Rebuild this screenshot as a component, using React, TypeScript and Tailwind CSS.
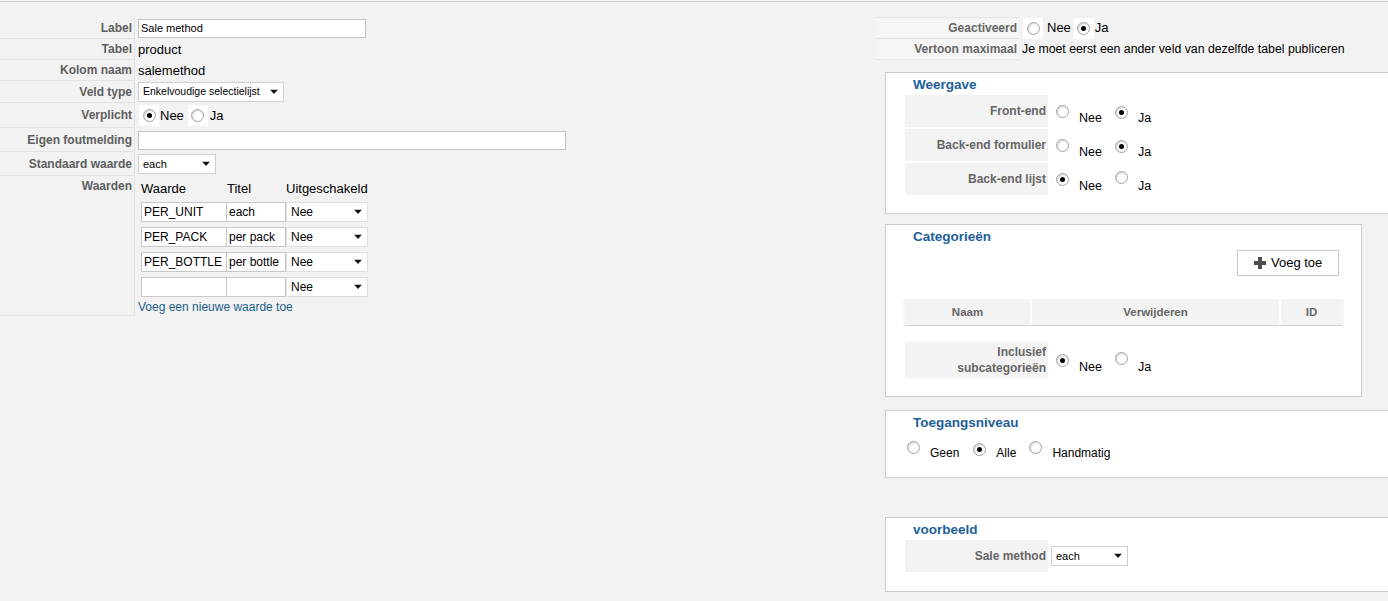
import React from "react";

function Radio({ checked = false }: { checked?: boolean }) {
  return (
    <span className="inline-flex h-[13px] w-[13px] shrink-0 items-center justify-center rounded-full border border-[#a3a3a3] bg-white shadow-[inset_1px_1px_2px_rgba(0,0,0,0.18)]">
      {checked && <span className="h-[5px] w-[5px] rounded-full bg-black" />}
    </span>
  );
}

function Arrow() {
  return (
    <svg width="8" height="5" viewBox="0 0 8 5" className="absolute right-[5px] top-1/2 -translate-y-1/2">
      <path d="M0 0h8L4 4.5z" fill="#111" />
    </svg>
  );
}

function Select({ value, w, text = "text-[11px]", border = "border-[#cfcfcf]" }: { value: string; w: string; text?: string; border?: string }) {
  return (
    <div className={`relative flex h-[20px] items-center border bg-white pl-[4px] ${border} ${w} ${text}`}>
      {value}
      <Arrow />
    </div>
  );
}

function LeftRow({ label, h, top = false, children }: { label: string; h: string; top?: boolean; children?: React.ReactNode }) {
  return (
    <div className="flex">
      <div
        className={`flex w-[135px] shrink-0 justify-end border-b border-r border-[#e2e2e2] pr-[2px] text-[12px] font-bold leading-[14px] text-[#5e5e5e] ${h} ${
          top ? "items-start pt-[3px]" : "items-center"
        }`}
      >
        {label}
      </div>
      <div className={`flex items-center pl-[3px] ${top ? "items-start" : ""}`}>{children}</div>
    </div>
  );
}

function PanelLabel({ children, h = "h-[32px]" }: { children: React.ReactNode; h?: string }) {
  return (
    <div className={`flex w-[143px] shrink-0 items-center justify-end bg-[#f3f3f3] pr-[2px] text-right text-[12px] font-bold leading-[16px] text-[#666] ${h}`}>
      {children}
    </div>
  );
}

function YesNo({ yes }: { yes: boolean }) {
  return (
    <div className="flex items-center pl-[8px] text-[12.5px] leading-[14px]">
      <Radio checked={!yes} />
      <span className="ml-[10px] pt-[13px]">Nee</span>
      <span className="ml-[13px]">
        <Radio checked={yes} />
      </span>
      <span className="ml-[10px] pt-[13px]">Ja</span>
    </div>
  );
}

function Heading({ children }: { children: React.ReactNode }) {
  return <div className="pl-[27px] pt-[4px] text-[13.5px] font-bold leading-[16px] text-[#22609a]">{children}</div>;
}

const values = [
  ["PER_UNIT", "each"],
  ["PER_PACK", "per pack"],
  ["PER_BOTTLE", "per bottle"],
  ["", ""],
];

export default function App() {
  return (
    <div className="h-[601px] w-[1388px] overflow-hidden bg-[#f2f2f2] font-['Liberation_Sans',Arial,sans-serif] text-black">
      <div className="mt-px h-px bg-[#cfcfcf]" />
      <div className="flex pt-[15px]">
        {/* field settings */}
        <div className="w-[876px] shrink-0">
          <LeftRow label="Label" h="h-[22px]">
            <div className="flex h-[19px] w-[228px] items-center border border-[#c3c3c3] bg-white pl-[2px] text-[11px]">Sale method</div>
          </LeftRow>
          <LeftRow label="Tabel" h="h-[21px]">
            <span className="pt-px text-[13px]">product</span>
          </LeftRow>
          <LeftRow label="Kolom naam" h="h-[21px]">
            <span className="pt-px text-[13px]">salemethod</span>
          </LeftRow>
          <LeftRow label="Veld type" h="h-[22px]">
            <Select value="Enkelvoudige selectielijst" w="w-[146px]" text="text-[10.5px]" />
          </LeftRow>
          <LeftRow label="Verplicht" h="h-[25px]">
            <div className="flex h-[24px] items-center text-[13px]">
              <span className="ml-px flex h-[21px] w-[20px] items-center justify-center bg-white">
                <Radio checked />
              </span>
              <span className="ml-[1px]">Nee</span>
              <span className="ml-[4px] flex h-[21px] w-[20px] items-center justify-center bg-white">
                <Radio />
              </span>
              <span className="ml-[2px]">Ja</span>
            </div>
          </LeftRow>
          <LeftRow label="Eigen foutmelding" h="h-[24px]">
            <div className="h-[19px] w-[428px] border border-[#c3c3c3] bg-white" />
          </LeftRow>
          <LeftRow label="Standaard waarde" h="h-[24px]">
            <Select value="each" w="w-[78px]" />
          </LeftRow>
          <LeftRow label="Waarden" h="h-[140px]" top>
            <div className="flex flex-col">
              <div className="pl-[3px]">
                <div className="mt-[6px] flex text-[13px] leading-[14px]">
                  <span className="w-[86px]">Waarde</span>
                  <span className="w-[59px]">Titel</span>
                  <span>Uitgeschakeld</span>
                </div>
                <div className="mt-[6px] flex flex-col gap-[5px]">
                  {values.map(([code, title], i) => (
                    <div key={i} className="flex text-[12px]">
                      <div className="flex h-[20px] w-[86px] items-center border border-[#c8c8c8] bg-white pl-[2px]">{code}</div>
                      <div className="flex h-[20px] w-[59px] items-center border border-l-0 border-[#c8c8c8] bg-white pl-[2px]">{title}</div>
                      <Select value="Nee" w="w-[82px]" text="text-[12px]" border="border-[#dedede]" />
                    </div>
                  ))}
                </div>
              </div>
              <span className="mt-[3px] text-[12px] leading-[14px] text-[#215f8f]">Voeg een nieuwe waarde toe</span>
            </div>
          </LeftRow>
        </div>

        {/* publishing settings */}
        <div className="flex-1">
          <div className="flex">
            <div className="flex h-[22px] w-[143px] shrink-0 items-center justify-end border-y border-[#e4e4e4] bg-[#f5f5f5] pr-[2px] text-[12px] font-bold text-[#666]">
              Geactiveerd
            </div>
            <div className="flex items-center pl-[4px] text-[13px]">
              <span className="flex h-[21px] w-[20px] items-center justify-center bg-white">
                <Radio />
              </span>
              <span className="ml-[4px]">Nee</span>
              <span className="ml-[3px] flex h-[21px] w-[20px] items-center justify-center bg-white">
                <Radio checked />
              </span>
              <span className="ml-[1px]">Ja</span>
            </div>
          </div>
          <div className="flex">
            <div className="flex h-[21px] w-[143px] shrink-0 items-center justify-end border-b border-[#e4e4e4] bg-[#f5f5f5] pr-[2px] text-[12px] font-bold text-[#666]">
              Vertoon maximaal
            </div>
            <div className="flex items-center pl-[3px] text-[12.3px]">Je moet eerst een ander veld van dezelfde tabel publiceren</div>
          </div>

          {/* Weergave */}
          <div className="ml-[9px] mt-[12px] w-[540px] border border-[#cdcdcd] bg-white pb-[18px]">
            <Heading>Weergave</Heading>
            <div className="ml-[19px] mt-[2px] flex flex-col gap-[2px]">
              <div className="flex">
                <PanelLabel>Front-end</PanelLabel>
                <YesNo yes />
              </div>
              <div className="flex">
                <PanelLabel>Back-end formulier</PanelLabel>
                <YesNo yes />
              </div>
              <div className="flex">
                <PanelLabel>Back-end lijst</PanelLabel>
                <YesNo yes={false} />
              </div>
            </div>
          </div>

          {/* Categorieën */}
          <div className="ml-[9px] mt-[10px] w-[477px] border border-[#cdcdcd] bg-white pb-[18px]">
            <Heading>Categorieën</Heading>
            <div className="mt-[5px] flex justify-end pr-[22px]">
              <button className="flex h-[26px] w-[102px] items-center border border-[#c8c8c8] bg-white pl-[16px] text-[13px]">
                <svg width="12" height="12" viewBox="0 0 12 12" className="mr-[5px]">
                  <path d="M4 0h4v4h4v4H8v4H4V8H0V4h4z" fill="#4d4d4d" />
                </svg>
                Voeg toe
              </button>
            </div>
            <div className="mx-[17px] mt-[23px] flex h-[27px] bg-[#f6f6f6] px-[2px] pt-px text-[11.5px] font-bold text-[#666]">
              <div className="flex w-[125px] items-center justify-center border-b border-[#cfcfcf] bg-[#f3f3f3]">Naam</div>
              <div className="flex flex-1 items-center justify-center border-b border-l-2 border-[#cfcfcf] border-l-white bg-[#f3f3f3]">
                Verwijderen
              </div>
              <div className="flex w-[63px] items-center justify-center border-b border-l-2 border-[#cfcfcf] border-l-white bg-[#f3f3f3]">ID</div>
            </div>
            <div className="ml-[19px] mt-[16px] flex">
              <PanelLabel h="h-[36px]">
                Inclusief
                <br />
                subcategorieën
              </PanelLabel>
              <YesNo yes={false} />
            </div>
          </div>

          {/* Toegangsniveau */}
          <div className="ml-[9px] mt-[13px] w-[540px] border border-[#cdcdcd] bg-white pb-[17px]">
            <Heading>Toegangsniveau</Heading>
            <div className="ml-[21px] mt-[5px] flex items-start text-[12px] leading-[14px]">
              <span className="mt-[5px]">
                <Radio />
              </span>
              <span className="ml-[10px] mt-[10px]">Geen</span>
              <span className="ml-[14px] mt-[5px]">
                <Radio checked />
              </span>
              <span className="ml-[10px] mt-[10px]">Alle</span>
              <span className="ml-[13px] mt-[5px]">
                <Radio />
              </span>
              <span className="ml-[10px] mt-[10px]">Handmatig</span>
            </div>
          </div>

          {/* voorbeeld */}
          <div className="ml-[9px] mt-[39px] w-[540px] border border-[#cdcdcd] bg-white pb-[19px]">
            <Heading>voorbeeld</Heading>
            <div className="ml-[19px] mt-[2px] flex">
              <PanelLabel>Sale method</PanelLabel>
              <div className="flex items-center pl-[3px]">
                <Select value="each" w="w-[77px]" />
              </div>
            </div>
          </div>
        </div>
      </div>
    </div>
  );
}
